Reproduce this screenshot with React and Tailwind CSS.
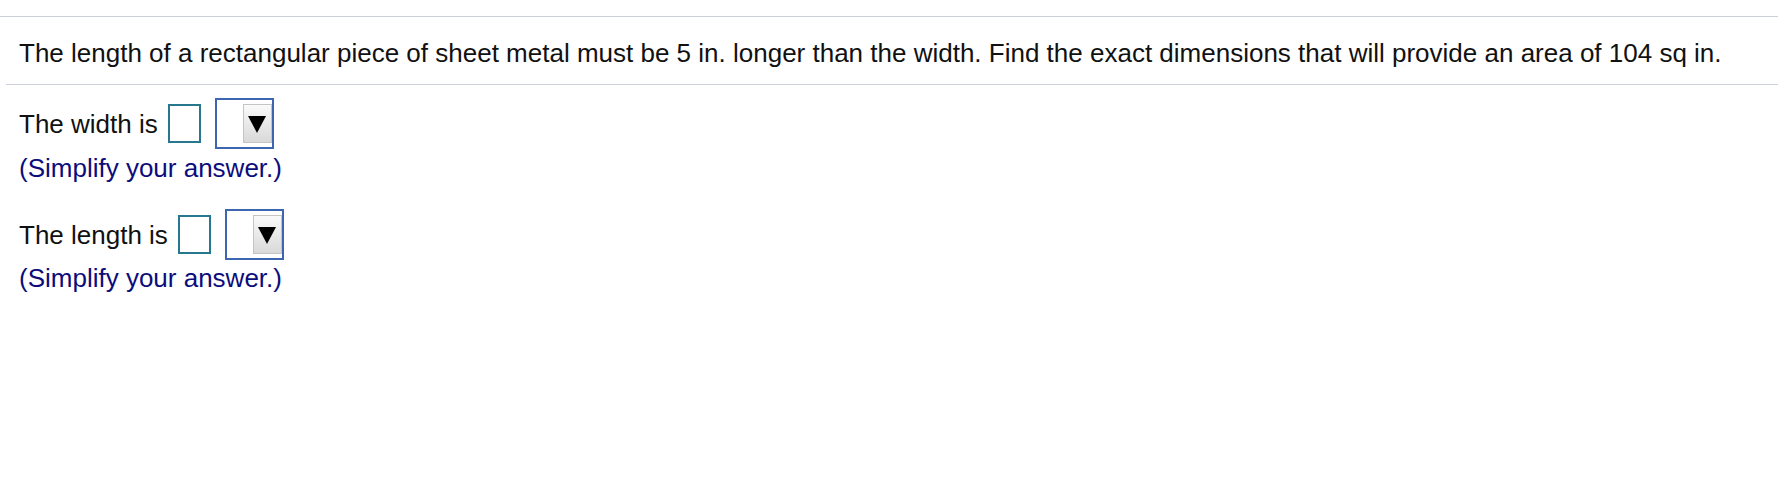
import React from 'react';

const AnswerBox = () => (
  <span className="inline-block h-[39px] w-[33px] border-2 border-[#27788f] bg-white" />
);

const UnitSelect = () => (
  <span className="flex h-[51px] w-[59px] items-center justify-end border-2 border-[#3e66b0] bg-white">
    <span className="flex h-[39px] w-[29px] items-center justify-center border border-[#c4c4c4] bg-gradient-to-b from-[#fafafa] to-[#d9d9d9]">
      <svg width="18" height="18" viewBox="0 0 18 18">
        <polygon points="0,1 18,1 9,18" fill="#000" />
      </svg>
    </span>
  </span>
);

const AnswerRow = ({ label }) => (
  <div className="flex h-[51px] items-center">
    <span className="text-[26px] leading-[30px] text-[#111]">{label}</span>
    <span className="w-[10px]" />
    <AnswerBox />
    <span className="w-[14px]" />
    <UnitSelect />
  </div>
);

const Hint = () => (
  <p className="text-[26px] leading-[30px] text-[#0c0c7c]">(Simplify your answer.)</p>
);

export default function App() {
  return (
    <div className="h-[482px] w-full overflow-hidden bg-white font-['Liberation_Sans',Arial,sans-serif]">
      <div className="pt-[16px]">
        <div className="border-t border-[#cdd1d9]" />
        <p className="px-[19px] pb-[16px] pt-[21px] text-[26px] leading-[30px] text-[#111]">
          The length of a rectangular piece of sheet metal must be 5 in. longer than the width. Find the exact dimensions that will provide an area of 104 sq in.
        </p>
        <div className="ml-[6px] border-t border-[#cdd1d9]" />
      </div>
      <div className="px-[19px] pt-[13px]">
        <AnswerRow label="The width is" />
        <div className="mt-[4px]">
          <Hint />
        </div>
        <div className="mt-[26px]">
          <AnswerRow label="The length is" />
        </div>
        <div className="mt-[3px]">
          <Hint />
        </div>
      </div>
    </div>
  );
}
